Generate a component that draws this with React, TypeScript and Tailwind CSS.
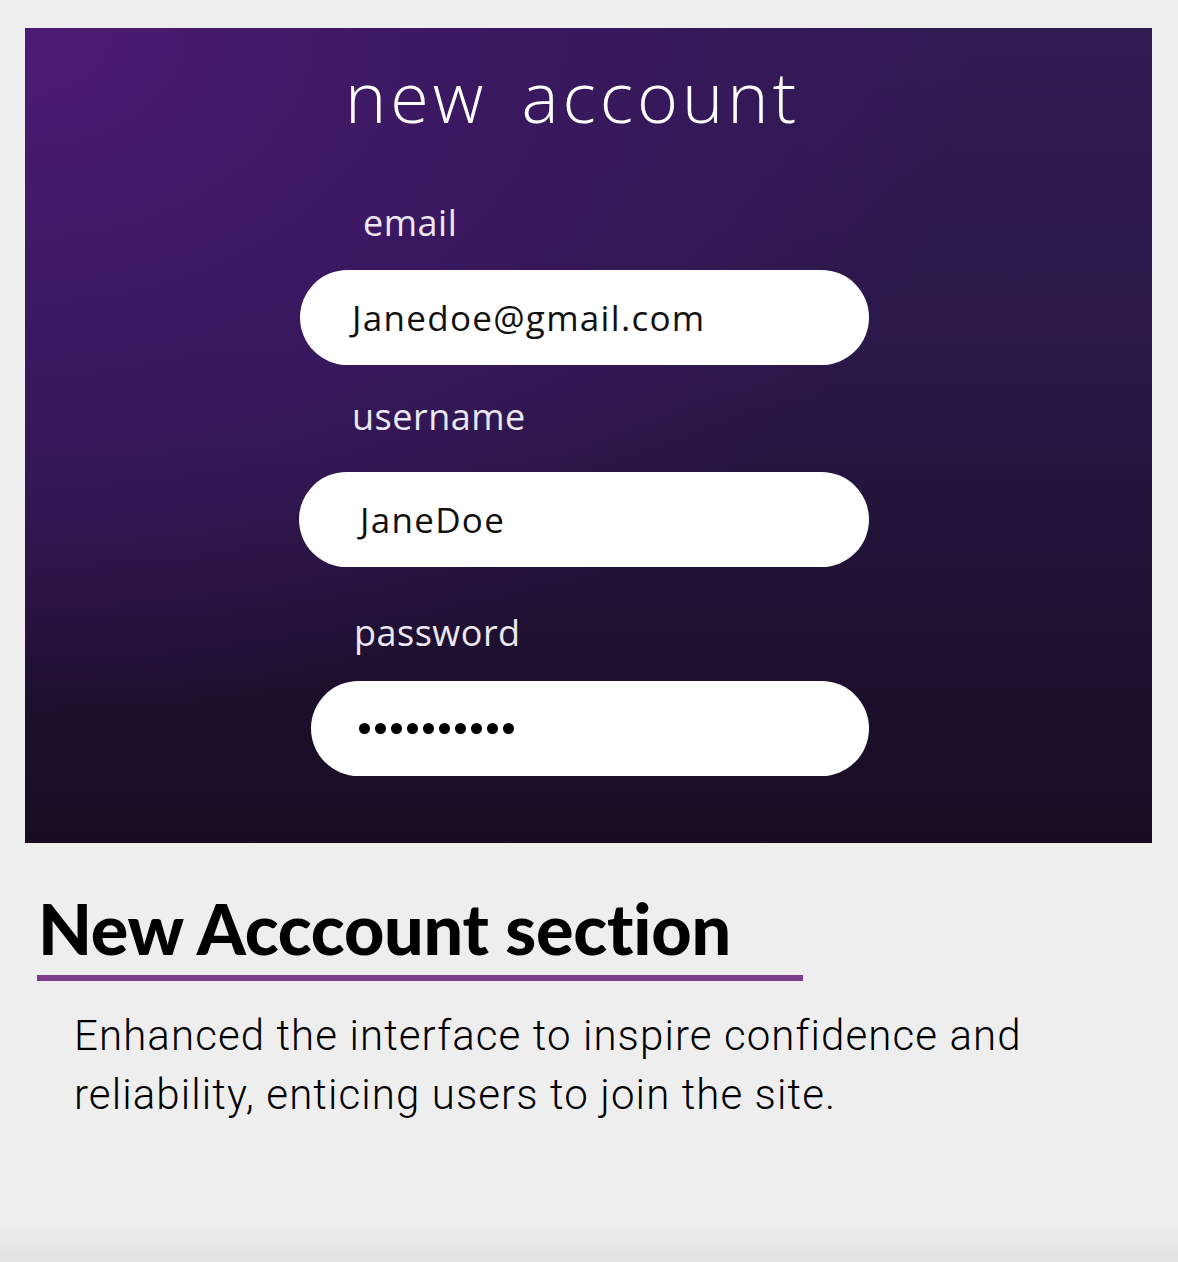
import React from "react";

const Field = ({ label, value, labelPad, boxPad, textPad, labelTop, boxTop, dots }: { label: string; value: string; labelPad: string; boxPad: string; textPad: string; labelTop: string; boxTop: string; dots?: boolean }) => (
  <div className="flex flex-col">
    <span className={`${labelTop} ${labelPad} text-[36px] leading-[40px] text-[#ece8f2] font-normal tracking-[0.5px]`}>{label}</span>
    <div className={`${boxTop} ${boxPad} h-[95px] rounded-full bg-white flex items-center`}>
      {dots ? (
        <span className={`${textPad} flex gap-[5px]`}>
          {Array.from({ length: 10 }).map((_, i) => (
            <span key={i} className="w-[11px] h-[11px] rounded-full bg-black" />
          ))}
        </span>
      ) : (
        <span className={`${textPad} text-[35px] leading-[40px] text-[#111] font-normal tracking-[1.3px]`}>{value}</span>
      )}
    </div>
  </div>
);

export default function App() {
  return (
    <div className="min-h-[1262px] w-[1178px] bg-[#eeeeee] flex flex-col pt-[28px] font-['Open_Sans',sans-serif] relative">
      <div className="mx-[25px] w-[1127px] h-[815px] bg-[radial-gradient(ellipse_at_0%_0%,#4c1c72_0%,#3a1860_30%,transparent_60%),linear-gradient(180deg,#301b52_0%,#2a1848_40%,#1e1030_75%,#190c22_100%)] flex flex-col">
        <h1 className="ml-[320px] mt-[30px] text-[70px] leading-[76px] text-white font-light tracking-[4px] flex gap-[34px]">
          <span>new</span>
          <span>account</span>
        </h1>
        <div className="w-[570px] ml-[274px] flex flex-col">
          <Field label="email" value="Janedoe@gmail.com" labelPad="pl-[64px]" boxPad="ml-[1px]" textPad="pl-[52px]" labelTop="mt-[69px]" boxTop="mt-[27px]" />
          <Field label="username" value="JaneDoe" labelPad="pl-[53px]" boxPad="" textPad="pl-[61px]" labelTop="mt-[32px]" boxTop="mt-[35px]" />
          <Field label="password" value="" labelPad="pl-[55px]" boxPad="ml-[12px]" textPad="pl-[48px]" labelTop="mt-[46px]" boxTop="mt-[28px]" dots />
        </div>
      </div>
      <div className="ml-[37px] mt-[47px] w-[766px]">
        <h2 className="text-[70px] leading-[76px] font-['Lato',sans-serif] font-black text-black tracking-[-0.2px] pl-[1px]">New Acccount section</h2>
        <div className="mt-[9px] h-[6px] bg-[#7e3c8c]" />
      </div>
      <p className="ml-[74px] mt-[25px] w-[1000px] text-[42px] leading-[59px] text-black font-['Roboto',sans-serif] font-light tracking-[1.1px]">
        Enhanced the interface to inspire confidence and reliability, enticing users to join the site.
      </p>
      <div className="absolute bottom-0 left-0 right-0 h-[40px] bg-gradient-to-b from-[#eeeeee] to-[#e2e2e2]" />
    </div>
  );
}
